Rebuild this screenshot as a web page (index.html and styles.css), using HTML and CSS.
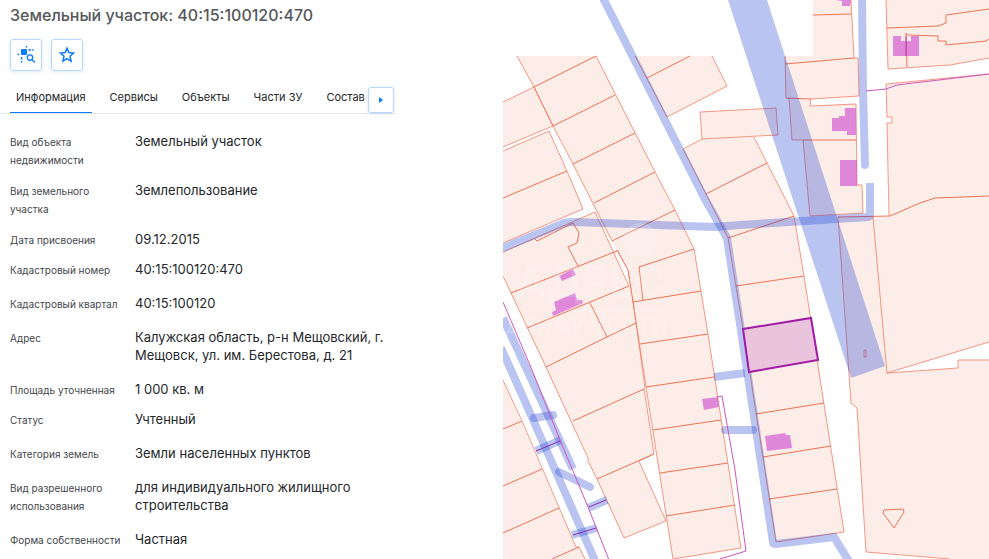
FILE: index.html
```html
<!DOCTYPE html>
<html lang="ru">
<head>
<meta charset="utf-8">
<meta name="viewport" content="width=device-width, initial-scale=1">
<title>Земельный участок: 40:15:100120:470</title>
<link rel="stylesheet" href="styles.css">
</head>
<body>
<main class="layout">
  <section class="panel">
    <h1 class="title">Земельный участок: 40:15:100120:470</h1>
    <div class="actions">
      <button class="icon-button" type="button" aria-label="Найти на карте">
        <svg class="icon" viewBox="0 0 20 20" aria-hidden="true">
          <rect x="5" y="4" width="6" height="6" rx="1" fill="currentColor"/>
          <path d="M10.5 1v1.6M1.5 9.4h1.7M12.5 4.9h2.6M16.2 4.9h1.5M5.6 12v2.4M5.6 16v1.6" fill="none" stroke="currentColor" stroke-width="1.5"/>
          <circle cx="14" cy="12.6" r="2.7" fill="none" stroke="currentColor" stroke-width="1.3"/>
          <path d="M16 14.7l2.8 2.8" fill="none" stroke="currentColor" stroke-width="1.4"/>
        </svg>
      </button>
      <button class="icon-button" type="button" aria-label="В избранное">
        <svg class="icon" viewBox="0 0 20 20" aria-hidden="true">
          <path d="M10 3.3L11.8 7.6 16.6 8.100 13 11.300 14.100 16.100 10 13.600 5.900 16.100 7 11.300 3.400 8.100 8.200 7.600z" fill="none" stroke="currentColor" stroke-width="1.5"/>
        </svg>
      </button>
    </div>
    <nav class="tabs">
      <div class="tab-list" role="tablist">
        <button class="tab tab-active" type="button" role="tab" aria-selected="true">Информация</button>
        <button class="tab" type="button" role="tab">Сервисы</button>
        <button class="tab" type="button" role="tab">Объекты</button>
        <button class="tab" type="button" role="tab">Части ЗУ</button>
        <button class="tab" type="button" role="tab">Состав</button>
      </div>
      <button class="tab-next" type="button" aria-label="Следующие вкладки">
        <svg class="arrow" viewBox="0 0 4 6" aria-hidden="true"><path d="M0 0l4 3-4 3z" fill="currentColor"/></svg>
      </button>
    </nav>
    <dl class="details">
      <div class="row"><dt>Вид объекта недвижимости</dt><dd>Земельный участок</dd></div>
      <div class="row"><dt>Вид земельного участка</dt><dd>Землепользование</dd></div>
      <div class="row row-compact"><dt>Дата присвоения</dt><dd>09.12.2015</dd></div>
      <div class="row"><dt>Кадастровый номер</dt><dd>40:15:100120:470</dd></div>
      <div class="row"><dt>Кадастровый квартал</dt><dd>40:15:100120</dd></div>
      <div class="row"><dt>Адрес</dt><dd>Калужская область, р-н Мещовский, г. Мещовск, ул. им. Берестова, д. 21</dd></div>
      <div class="row row-compact"><dt>Площадь уточненная</dt><dd>1 000 кв. м</dd></div>
      <div class="row"><dt>Статус</dt><dd>Учтенный</dd></div>
      <div class="row"><dt>Категория земель</dt><dd>Земли населенных пунктов</dd></div>
      <div class="row"><dt>Вид разрешенного использования</dt><dd>для индивидуального жилищного строительства</dd></div>
      <div class="row"><dt>Форма собственности</dt><dd>Частная</dd></div>
    </dl>
  </section>
  <svg class="map" viewBox="503 0 486 559" preserveAspectRatio="xMinYMin slice" role="img" aria-label="Кадастровая карта">
    <!-- parcels -->
    <path class="parcel-fill" d="M517 56H596L655 172 675 210 694 249 708 334 741 548 673 559 646 387 633 302 628 270 612 241 573 164z
      M503 102L534 87 553 126 503 147z
      M503 151L549 131 567 171 583 209 503 243z
      M503 252L595 212 629 286 633 302 644 388 654 454 639 461 666 521 624 538 588 461 588 458 503 276z
      M503 380L576 547H579L585 559H503z
      M635 56H712L727 86 667 117z
      M700 112L776 108 778 135 702 139z
      M702 139L683 149 728 238 743 329 776 542 844 532 804 276 794 216 754 137z
      M813 0H851L854 58H858L859 96 811 99 810 106 856 104 857 185H862L863 213 810 216 803 140H792L789 98H786L785 56H813z
      M886 0L888 69 950 65 989 58V0z
      M886 84L989 74V342L887 373 873 217 890 216 887 123H892V117H887z
      M838 217H873L887 373 958 368V360H989V559H950L866 552 857 408 851 403z"/>
    <g class="parcel-line">
      <!-- western blocks -->
      <path class="soft" d="M596 56L655 172 675 210 694 249 708 334 741 548 673 559 646 387 633 302 628 270 617 250M612 241L573 164 553 126 534 87 517 56"/>
      <path d="M534 87L596 56M553 126L615 95M573 164L635 133M594 203L655 172M612 241L675 210M643 300L639 267 694 249M633 302L701 291M640 344L708 334M646 387L714 377M653 430L721 420M660 473L728 463M666 516L735 505"/>
      <path class="soft" d="M503 102L534 87 553 126 503 147M503 151L549 131 567 171 583 209 503 243M503 252L595 212 629 286M617 250L628 270 633 302 636 323 645 388M644 388L654 454 639 461M503 276L511 293 546 367 588 458V461L597 479 624 538 666 521 639 461"/>
      <path d="M503 198L567 171M511 293L617 251M527 328L629 286M546 367L607 337 636 323M590 303L607 337M573 421L644 389M597 479L654 454M535 239L537 241 573 223 579 233 577 243 568 247 578 266"/>
      <path class="soft" d="M503 380L522 421 576 547H579L585 559"/>
      <path d="M503 429L522 421M503 486L542 469M503 533L559 508M552 559L579 547"/>
      <!-- central block -->
      <path class="soft" d="M635 56L667 117 727 86 712 56M700 112L776 108 778 135 702 139z"/>
      <path d="M647 78L690 56"/>
      <path class="soft" d="M702 139L683 149 706 194 728 238 743 329 776 542 844 532 804 276 794 216 767 163 754 137"/>
      <path d="M706 194L767 163M728 238L794 216M736 286L804 276M756 414L824 403M763 457L831 446M769 499L837 489"/>
      <!-- eastern blocks -->
      <path class="soft" d="M851 0L854 58H858L859 96 811 99 810 106 856 104 857 185H862L863 213 810 216 803 140H792L789 98M786 98L785 56"/>
      <path d="M813 15L851 14M785 64L854 58M786 98L811 99M803 140L856 140"/>
      <path class="soft" d="M886 0L888 69 950 65 989 58M889 216L887 123H892V117H887L886 84 989 74M873 217L887 373 989 342"/>
      <path d="M887 28L938 26 946 23V15L989 9M907 67L906 33 908 35 938 36V41H946V45L986 41 989 39M838 217L890 216 920 203 935 198 989 196"/>
      <path class="soft" d="M838 217L851 403 857 408 866 552 950 559M887 373L958 368V360H989"/>
      <path d="M884 510L903 509 904 512 894 528 883 513z"/>
      <path class="soft" d="M864 350H866V357H864z"/>
    </g>
    <!-- zones -->
    <path class="zone-area" d="M728 0H767L885 366 851 378z"/>
    <g class="zone">
      <path d="M603 -2L705 199 727 238 773 542Q773 544 776 544L834 537 850 563"/>
      <path d="M498 250L564 223Q568 222 574 222L715 227 740 225 868 217Q870 217 870 214V183"/>
      <path d="M503 318L528 372 573 469"/>
      <path d="M501 348L511 370 542 440 596 563"/>
      <path d="M536 451L561 440M588 508L607 500M572 535L597 528"/>
      <path d="M714 377L745 373"/>
      <path class="round" d="M862 -4L863 90 865 165M534 418L553 415M559 472L590 487M725 430L753 430"/>
    </g>
    <!-- buildings -->
    <g class="building">
      <path d="M835 0H851L850 6H842V1zM893 36H901V41H911V36H919V56H893zM832 118L839 118V116H845V108H856V135H847V131H832zM840 160H857V186H840z"/>
      <path d="M559 276L573 269 576 275 562 281zM554 302L575 293 577 300H582L583 303 553 316 552 312 556 310zM702 399L718 397 719 407 704 410zM765 436L785 433 786 435H790L792 448 767 451z"/>
    </g>
    <path class="building-line" d="M906 36V56"/>
    <!-- utility lines -->
    <g class="utility">
      <path d="M503 302L532 370 560 440 588 507 609 560M717 397L722 396 735 470 746 551 720 559M866 91L886 89 897 85 989 74"/>
      <path class="dark" d="M536 451L560 441M589 507L606 500M573 535L596 528"/>
    </g>
    <path class="selected" d="M743 329L811 318 818 360 749 372z"/>
    <!-- watermark -->
    <g class="watermark" aria-hidden="true">
      <circle cx="640" cy="240" r="17"/>
      <path d="M570 310H663V312H570z"/>
      <text x="516" y="297" class="mark-large">АДРЕС</text>
      <text x="505" y="333" class="mark-small">ДВИЖИМОСТИ</text>
    </g>
  </svg>
</main>
</body>
</html>
```
FILE: styles.css
```css
* {
  box-sizing: border-box;
}

body {
  margin: 0;
  background: #fff;
  color: #24272b;
  font-family: Inter, "Liberation Sans", sans-serif;
}

button {
  font: inherit;
  color: inherit;
  padding: 0;
  border: 0;
  background: none;
  cursor: pointer;
}

.layout {
  display: grid;
  grid-template-columns: 503px minmax(0, 1fr);
  grid-template-rows: minmax(0, 1fr);
  height: 100vh;
  overflow: hidden;
}

.panel {
  padding-top: 5px;
}

.title {
  margin: 0 0 14px 10px;
  font-size: 16px;
  line-height: 20px;
  font-weight: 500;
  color: #55585c;
}

.actions {
  display: flex;
  gap: 9px;
  margin-left: 10px;
}

.icon-button {
  display: grid;
  place-items: center;
  width: 32px;
  height: 32px;
  border: 1px solid #b5d8ff;
  border-radius: 3px;
  color: #0a7cff;
  box-shadow: 0 1px 4px rgba(0, 80, 180, 0.12);
}

.icon {
  width: 20px;
  height: 20px;
}

.tabs {
  display: flex;
  width: 396px;
  margin-top: 15px;
  padding: 0 2px 0 10px;
  border-bottom: 1px solid #e6e8eb;
}

.tab-list {
  display: flex;
  flex: 1;
  gap: 12px;
  min-width: 0;
  overflow: hidden;
}

.tab {
  flex: none;
  height: 27px;
  padding: 0 6px 5px;
  border-bottom: 1px solid transparent;
  font-size: 11px;
  line-height: 20px;
  white-space: nowrap;
}

.tab-active {
  border-bottom-color: #0a7cff;
}

.tab-next {
  display: grid;
  place-items: center;
  flex: none;
  width: 26px;
  height: 26px;
  margin-top: 1px;
  border: 1px solid #b5d8ff;
  border-radius: 3px;
  background: #fff;
  color: #0a7cff;
  box-shadow: 0 1px 4px rgba(0, 80, 180, 0.12);
}

.arrow {
  width: 4px;
  height: 6px;
}

.details {
  width: 396px;
  margin: 18px 0 0;
  padding-left: 10px;
}

.row {
  display: grid;
  grid-template-columns: 115px 1fr;
  column-gap: 10px;
}

.row dt {
  padding: 1px 0 12px;
  font-size: 10px;
  line-height: 18px;
  color: #43474c;
}

.row dd {
  margin: 0;
  padding-bottom: 16px;
  font-size: 13px;
  line-height: 18px;
}

.row-compact dt {
  padding-bottom: 11px;
}

.row-compact dd {
  padding-bottom: 12px;
}

.map {
  display: block;
  width: 100%;
  height: 100%;
}

.zone-area {
  fill: rgba(28, 58, 208, 0.3);
}

.zone path {
  fill: none;
  stroke: rgba(28, 58, 208, 0.3);
  stroke-width: 8;
}

.zone .round {
  stroke-linecap: round;
}

.parcel-fill {
  fill: rgba(235, 75, 25, 0.1);
}

.parcel-line path {
  fill: none;
  stroke: #ee7257;
  stroke-width: 1;
}

.parcel-line .soft {
  stroke: rgba(238, 100, 70, 0.65);
}

.building {
  fill: rgba(205, 75, 210, 0.62);
}

.building-line {
  stroke: #c43bb0;
}

.utility path {
  fill: none;
  stroke: #cf55bd;
  stroke-width: 1;
}

.utility .dark {
  stroke: #8a2bb0;
}

.selected {
  fill: #eac3dc;
  stroke: #a11aa8;
  stroke-width: 2;
}

.watermark {
  fill: rgba(255, 255, 255, 0.18);
}

.mark-large {
  font-size: 42px;
  font-weight: 600;
}

.mark-small {
  font-size: 21px;
}
```
